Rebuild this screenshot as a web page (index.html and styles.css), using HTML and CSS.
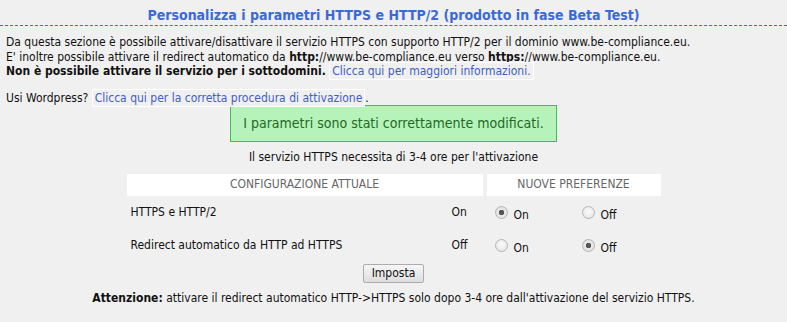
FILE: index.html
```html
<!DOCTYPE html>
<html lang="it">
<head>
    <meta charset="UTF-8">
    <title>Personalizza HTTPS e HTTP/2</title>
    <link rel="stylesheet" href="styles.css">
</head>
<body>
    <h2 class="title">Personalizza i parametri HTTPS e HTTP/2 (prodotto in fase Beta Test)</h2>

    <p class="intro">
        Da questa sezione è possibile attivare/disattivare il servizio HTTPS con supporto HTTP/2 per il dominio www.be-compliance.eu.<br>
        E' inoltre possibile attivare il redirect automatico da <b>http:</b>//www.be-compliance.eu verso <b>https:</b>//www.be-compliance.eu.<br>
        <b>Non è possibile attivare il servizio per i sottodomini.</b> <a href="#" class="box-link">Clicca qui per maggiori informazioni.</a>
    </p>

    <p class="wp">Usi Wordpress? <a href="#" class="box-link">Clicca qui per la corretta procedura di attivazione</a>.</p>

    <div class="success">I parametri sono stati correttamente modificati.</div>

    <p class="note">Il servizio HTTPS necessita di 3-4 ore per l'attivazione</p>

    <form class="settings">
        <table class="config">
            <tr>
                <th colspan="2">Configurazione attuale</th>
                <th colspan="2">Nuove preferenze</th>
            </tr>
            <tr>
                <td class="label">HTTPS e HTTP/2</td>
                <td class="current">On</td>
                <td class="opt opt-on"><label><input type="radio" name="https" checked><span>On</span></label></td>
                <td class="opt opt-off"><label><input type="radio" name="https"><span>Off</span></label></td>
            </tr>
            <tr>
                <td class="label">Redirect automatico da HTTP ad HTTPS</td>
                <td class="current">Off</td>
                <td class="opt opt-on"><label><input type="radio" name="redirect"><span>On</span></label></td>
                <td class="opt opt-off"><label><input type="radio" name="redirect" checked><span>Off</span></label></td>
            </tr>
        </table>
        <div class="actions">
            <button type="button">Imposta</button>
        </div>
    </form>

    <p class="warning"><b>Attenzione:</b> attivare il redirect automatico HTTP-&gt;HTTPS solo dopo 3-4 ore dall'attivazione del servizio HTTPS.</p>
</body>
</html>
```

FILE: styles.css
```css
body {
    margin: 0;
    background: #f0f0f0;
    color: #111;
    font-family: "DejaVu Sans Condensed", "DejaVu Sans", sans-serif;
    font-size: 12px;
    line-height: 14.5px;
}
.title {
    margin: 0;
    padding: 7px 0 1px;
    text-align: center;
    font-size: 14px;
    line-height: 17px;
    color: #3a6ad6;
    border-bottom: 1px dashed #3a6ad6;
}
.intro {
    margin: 9px 0 0;
    padding-left: 6px;
}
.box-link {
    color: #3f5fc2;
    text-decoration: none;
    background: #f0f0f0;
    border: 1px solid #fff;
    padding: 1px 2px;
}
.wp {
    margin: 12px 0 0;
    padding-left: 6px;
}
.success {
    width: 325px;
    margin: 0 auto;
    height: 35px;
    line-height: 35px;
    text-align: center;
    font-size: 14px;
    color: #1f6a1f;
    background: #b6f3ba;
    border: 1px solid #3fc04c;
}
.note {
    margin: 8px 0 0;
    text-align: center;
}
.config {
    margin: 9px auto 0;
    border-spacing: 4px 0;
}
.config th {
    background: #fff;
    color: #666;
    font-weight: normal;
    text-transform: uppercase;
    font-size: 12px;
    height: 22px;
    padding: 0;
}
.config td {
    height: 33px;
    padding: 0;
}
.config .label {
    width: 313px;
    padding-left: 4px;
}
.config .current {
    width: 31px;
    padding-left: 4px;
}
.opt {
    width: 85px;
}
.opt label {
    display: flex;
    align-items: center;
}
.opt span {
    padding-top: 7px;
}
.opt input {
    appearance: none;
    width: 13px;
    height: 13px;
    margin: 0 6px 0 0;
    border: 1px solid #b4b4b4;
    border-radius: 50%;
    background: radial-gradient(circle at 50% 40%, #fafafa, #e2e2e2);
}
.opt input:checked {
    background: radial-gradient(circle, #555 0 2.5px, #e8e8e8 3px, #dcdcdc);
}
.opt-on input {
    margin-left: 8px;
}
.opt-off input {
    margin-left: 6px;
}
.actions {
    margin-top: 2px;
    text-align: center;
}
.actions button {
    font-family: inherit;
    font-size: 12px;
    height: 19px;
    line-height: 15px;
    padding: 0 8px;
    color: #111;
    background: linear-gradient(#f6f6f6, #dedede);
    border: 1px solid #acacac;
    border-radius: 2px;
}
.warning {
    margin: 8px 0 0;
    text-align: center;
}
```
